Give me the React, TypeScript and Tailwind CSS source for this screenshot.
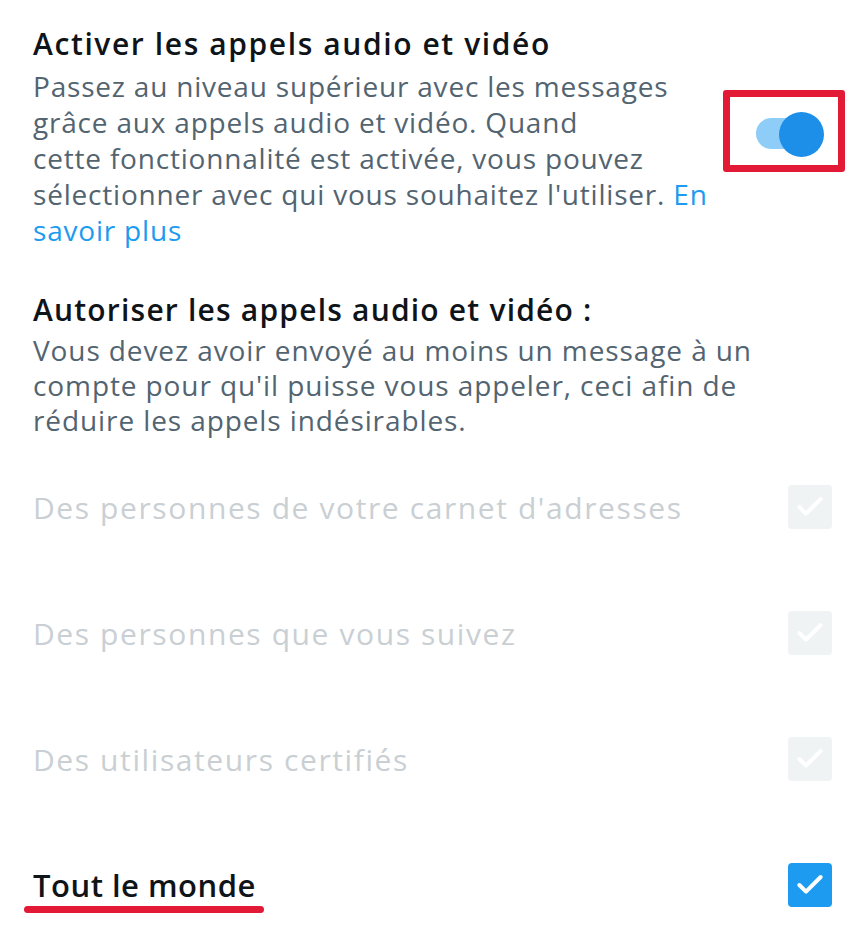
import { Check } from 'lucide-react';

const options = [
  { label: "Des personnes de votre carnet d'adresses", disabled: true },
  { label: 'Des personnes que vous suivez', disabled: true },
  { label: 'Des utilisateurs certifiés', disabled: true },
  { label: 'Tout le monde', disabled: false },
];

export default function App() {
  return (
    <div
      className="w-[859px] h-[928px] bg-white overflow-hidden px-[33px] pt-[24px]"
      style={{ fontFamily: '"Open Sans", Roboto, sans-serif' }}
    >
      {/* Activer les appels */}
      <div className="relative flex justify-between">
        <div>
          <h2 className="text-[30px] leading-[40px] font-semibold tracking-[1.6px] text-[#0f1419]">
            Activer les appels audio et vidéo
          </h2>
          <p className="mt-[4px] text-[28px] leading-[36px] tracking-[0.8px] text-[#536471]">
            Passez au niveau supérieur avec les messages
            <br />
            grâce aux appels audio et vidéo. Quand
            <br />
            cette fonctionnalité est activée, vous pouvez
            <br />
            sélectionner avec qui vous souhaitez l'utiliser.{' '}
            <span className="text-[#1d9bf0]">En</span>
            <br />
            <span className="text-[#1d9bf0]">savoir plus</span>
          </p>
        </div>

        <div className="relative mt-[88px] mr-[-6px] w-[76px] h-[45px] shrink-0">
          <div className="absolute left-0 top-[6px] w-[60px] h-[31px] rounded-full bg-[#8ecdf8]" />
          <div className="absolute right-[8px] top-0 w-[45px] h-[45px] rounded-full bg-[#1d8fe8]" />
        </div>

        {/* annotation box */}
        <div className="absolute left-[690px] top-[66px] w-[122px] h-[82px] border-[7px] border-[#e31a36] rounded-[3px]" />
      </div>

      {/* Autoriser les appels */}
      <div className="mt-[42px]">
        <h2 className="text-[30px] leading-[40px] font-semibold tracking-[1.2px] text-[#0f1419]">
          Autoriser les appels audio et vidéo :
        </h2>
        <p className="mt-[3px] text-[28px] leading-[35px] tracking-[0.9px] text-[#536471]">
          Vous devez avoir envoyé au moins un message à un
          <br />
          compte pour qu'il puisse vous appeler, ceci afin de
          <br />
          réduire les appels indésirables.
        </p>
      </div>

      <div className="mt-[6px]">
        {options.map((o) => (
          <div key={o.label} className="h-[126px] flex items-center justify-between">
            <div className="relative">
              <span
                className={
                  o.disabled
                    ? 'text-[30px] tracking-[1.6px] text-[#c9cfd3]'
                    : 'text-[31px] font-semibold tracking-[0.5px] text-[#0f1419]'
                }
              >
                {o.label}
              </span>
              {!o.disabled && (
                <div className="absolute left-[-9px] top-[44px] w-[240px] h-[7px] rounded-full bg-[#e31a36]" />
              )}
            </div>
            <div
              className={
                'w-[44px] h-[44px] rounded-[4px] flex items-center justify-center mr-[-6px] ' +
                (o.disabled ? 'bg-[#eff3f4]' : 'bg-[#1d9bf0]')
              }
            >
              <Check className="w-[32px] h-[32px] text-white" strokeWidth={3} />
            </div>
          </div>
        ))}
      </div>
    </div>
  );
}
